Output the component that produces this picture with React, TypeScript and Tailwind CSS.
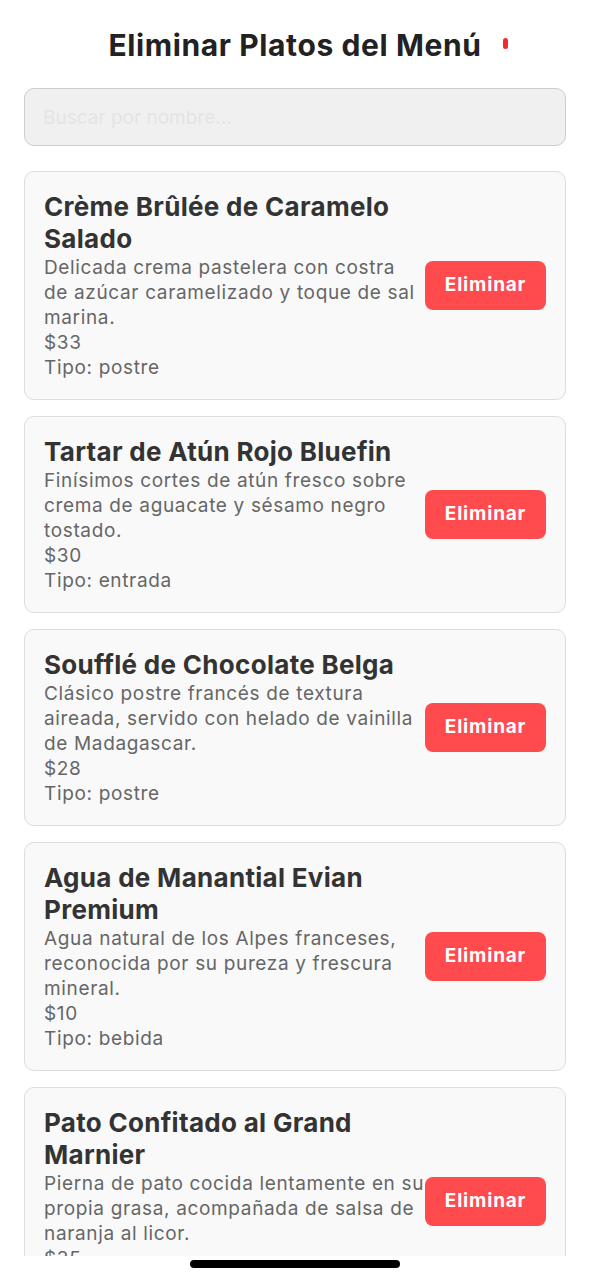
import React from 'react'

type Plato = {
  nombre: string
  descripcion: string
  precio: number
  tipo: string
}

const platos: Plato[] = [
  {
    nombre: 'Crème Brûlée de Caramelo Salado',
    descripcion: 'Delicada crema pastelera con costra de azúcar caramelizado y toque de sal marina.',
    precio: 33,
    tipo: 'postre',
  },
  {
    nombre: 'Tartar de Atún Rojo Bluefin',
    descripcion: 'Finísimos cortes de atún fresco sobre crema de aguacate y sésamo negro tostado.',
    precio: 30,
    tipo: 'entrada',
  },
  {
    nombre: 'Soufflé de Chocolate Belga',
    descripcion: 'Clásico postre francés de textura aireada, servido con helado de vainilla de Madagascar.',
    precio: 28,
    tipo: 'postre',
  },
  {
    nombre: 'Agua de Manantial Evian Premium',
    descripcion: 'Agua natural de los Alpes franceses, reconocida por su pureza y frescura mineral.',
    precio: 10,
    tipo: 'bebida',
  },
  {
    nombre: 'Pato Confitado al Grand Marnier',
    descripcion: 'Pierna de pato cocida lentamente en su propia grasa, acompañada de salsa de naranja al licor.',
    precio: 35,
    tipo: 'principal',
  },
]

function PlatoCard({ plato }: { plato: Plato }) {
  return (
    <div className="flex items-center rounded-[10px] border border-[#dddddd] bg-[#f9f9f9] p-[19px]">
      <div className="min-w-0 flex-1">
        <h2 className="pr-[10px] text-[26px] leading-[32px] font-bold tracking-[0.3px] text-[#333333]">{plato.nombre}</h2>
        <p className="text-[19px] leading-[25px] tracking-[0.65px] text-[#666666]">{plato.descripcion}</p>
        <p className="text-[19px] leading-[25px] tracking-[0.65px] text-[#666666]">${plato.precio}</p>
        <p className="text-[19px] leading-[25px] tracking-[0.65px] text-[#666666]">Tipo: {plato.tipo}</p>
      </div>
      <button className="h-[49px] w-[121px] shrink-0 rounded-[8px] bg-[#ff4b4e] text-[19px] font-bold tracking-[0.8px] text-white">
        Eliminar
      </button>
    </div>
  )
}

export default function App() {
  return (
    <div className="relative flex h-[1280px] w-[590px] flex-col overflow-hidden bg-white font-[Inter,'Noto_Sans',sans-serif]">
      <div className="min-h-0 flex-1 overflow-hidden px-[24px] pt-[26px]">
        <div className="relative">
          <h1 className="text-center text-[30px] leading-[38px] font-bold tracking-[0.6px] text-[#222222]">
            Eliminar Platos del Menú
          </h1>
          <span className="absolute top-[12px] left-[479px] h-[11px] w-[5px] rounded-full bg-[#f22b2b]" />
        </div>
        <input
          className="mt-[24px] h-[58px] w-full rounded-[10px] border border-[#cccccc] bg-[#f0f0f0] px-[18px] text-[19px] outline-none placeholder:text-[#e4e4e4]"
          placeholder="Buscar por nombre..."
        />
        <div className="mt-[25px] flex flex-col gap-[16px]">
          {platos.map((p) => (
            <PlatoCard key={p.nombre} plato={p} />
          ))}
        </div>
      </div>
      <div className="h-[24px] shrink-0 bg-white" />
      <div className="absolute bottom-[12px] left-[190px] h-[8px] w-[210px] rounded-full bg-black" />
    </div>
  )
}
